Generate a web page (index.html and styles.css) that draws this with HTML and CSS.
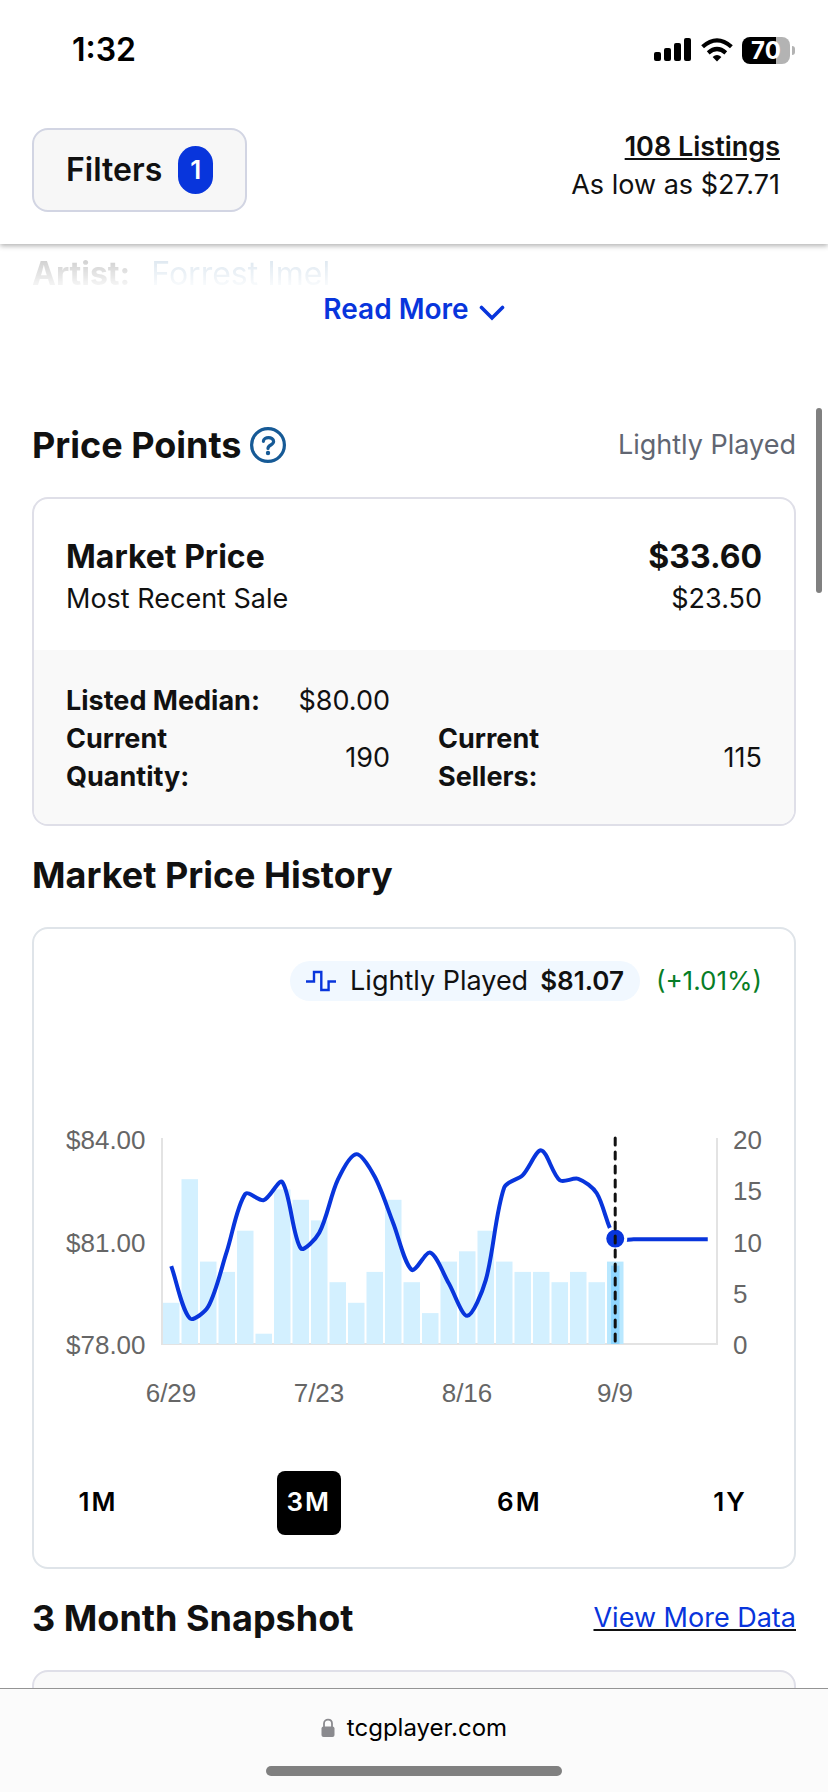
FILE: index.html
```html
<!DOCTYPE html>
<html lang="en">
<head>
    <meta charset="UTF-8">
    <meta name="viewport" content="width=device-width, initial-scale=1.0">
    <title>Price Points</title>
    <link rel="stylesheet" href="styles.css">
</head>
<body>
    <header class="top">
        <div class="status-bar">
            <span class="time">1:32</span>
            <div class="status-icons">
                <svg width="38" height="24" viewBox="0 0 38 24">
                    <rect x="0" y="14" width="7" height="9" rx="2"/>
                    <rect x="10" y="10" width="7" height="13" rx="2"/>
                    <rect x="20" y="5" width="7" height="18" rx="2"/>
                    <rect x="30" y="0" width="7" height="23" rx="2"/>
                </svg>
                <svg width="32" height="24" viewBox="0 0 32 24">
                    <path d="M16 23.5 L11.6 18.9 Q16 15.2 20.4 18.9 Z"/>
                    <path d="M7.2 14.8 Q16 7.3 24.8 14.8" fill="none" stroke="#000" stroke-width="4.2"/>
                    <path d="M1.6 8.8 Q16 -4 30.4 8.8" fill="none" stroke="#000" stroke-width="4.2"/>
                </svg>
                <div class="battery"><span class="battery-level">70</span></div>
            </div>
        </div>
        <div class="toolbar">
            <button class="filters" type="button">Filters <span class="badge">1</span></button>
            <div class="listings">
                <a href="#listings">108 Listings</a>
                <span>As low as $27.71</span>
            </div>
        </div>
    </header>

    <main class="content">
        <div class="description"><b>Artist:</b> <span>Forrest Imel</span></div>
        <button class="read-more" type="button">
            Read More
            <svg width="26" height="16" viewBox="0 0 26 16"><path d="M2.5 2.5 L13 13 L23.5 2.5"/></svg>
        </button>

        <section>
            <div class="section-head">
                <h2>Price Points
                    <svg class="help" width="36" height="36" viewBox="0 0 36 36">
                        <circle cx="18" cy="18" r="16.4"/>
                        <path d="M13.4 14.3 C13.4 9.6 23.6 9.2 23.6 14.6 C23.6 18.2 18 17.8 18 21.4"/>
                        <circle class="dot" cx="18" cy="26" r="2.2"/>
                    </svg>
                </h2>
                <span class="condition">Lightly Played</span>
            </div>
            <div class="card">
                <div class="prices">
                    <div class="row market"><span>Market Price</span><span>$33.60</span></div>
                    <div class="row"><span>Most Recent Sale</span><span>$23.50</span></div>
                </div>
                <div class="stats">
                    <div class="row stat"><b>Listed Median:</b><span>$80.00</span></div>
                    <div></div>
                    <div class="row stat"><b>Current Quantity:</b><span>190</span></div>
                    <div class="row stat"><b>Current Sellers:</b><span>115</span></div>
                </div>
            </div>
        </section>

        <section>
            <div class="section-head">
                <h2>Market Price History</h2>
            </div>
            <div class="card history">
                <div class="legend">
                    <div class="pill">
                        <svg width="30" height="22" viewBox="0 0 30 22"><path d="M0 11.5 H8 V2 H15.3 V20 H22.6 V11.5 H30"/></svg>
                        <span class="series">Lightly Played</span>
                        <b>$81.07</b>
                    </div>
                    <span class="change">(+1.01%)</span>
                </div>
                <svg class="chart" viewBox="0 0 696 300">
                    <g class="axis">
                        <path d="M96 18 V225 M95 224 H652 M651 18 V225"/>
                    </g>
                    <g id="bars"></g>
                    <path id="line" class="line"/>
                    <circle id="point" class="point" r="10.5"/>
                    <path class="cursor" d="M549.2 18 V223"/>
                    <g class="labels">
                        <text x="0" y="29">$84.00</text>
                        <text x="0" y="132">$81.00</text>
                        <text x="0" y="234">$78.00</text>
                        <text x="667" y="29">20</text>
                        <text x="667" y="80">15</text>
                        <text x="667" y="132">10</text>
                        <text x="667" y="183">5</text>
                        <text x="667" y="234">0</text>
                    </g>
                    <g class="labels dates">
                        <text x="105" y="282">6/29</text>
                        <text x="253" y="282">7/23</text>
                        <text x="401" y="282">8/16</text>
                        <text x="549" y="282">9/9</text>
                    </g>
                </svg>
                <div class="ranges">
                    <button type="button">1M</button>
                    <button type="button" class="active">3M</button>
                    <button type="button">6M</button>
                    <button type="button">1Y</button>
                </div>
            </div>
        </section>

        <section>
            <div class="section-head">
                <h2>3 Month Snapshot</h2>
                <a class="more-data" href="#data"><span>View More Data</span></a>
            </div>
            <div class="card snapshot"></div>
        </section>
        <div class="scroll-thumb"></div>
    </main>

    <footer class="browser-bar">
        <div class="address">
            <svg width="14" height="20" viewBox="0 0 14 20">
                <path d="M3 9 V5.6 C3 0.4 11 0.4 11 5.6 V9" fill="none" stroke="#8a8a8e" stroke-width="1.8"/>
                <rect x="0.5" y="8.6" width="13" height="10.4" rx="2" fill="#8a8a8e"/>
            </svg>
            <span>tcgplayer.com</span>
        </div>
        <div class="home-indicator"></div>
    </footer>
    <script src="chart.js"></script>
</body>
</html>
```
FILE: styles.css
```css
* {
    margin: 0;
    padding: 0;
    box-sizing: border-box;
}

body {
    display: flex;
    flex-direction: column;
    height: 100vh;
    overflow: hidden;
    font-family: Inter, "Liberation Sans", sans-serif;
    font-size: 27px;
    line-height: 38px;
    color: #111;
    background: #fff;
}

button {
    font: inherit;
    color: inherit;
    border: none;
    background: none;
    cursor: pointer;
}

a {
    color: inherit;
}

.top {
    position: relative;
    z-index: 1;
    background: #fff;
    box-shadow: 0 2px 5px rgba(0, 0, 0, 0.3);
}

.status-bar {
    display: flex;
    justify-content: space-between;
    align-items: center;
    height: 100px;
    padding: 0 33px 0 72px;
    color: #000;
}

.time {
    font-size: 32px;
    font-weight: 600;
}

.status-icons {
    display: flex;
    align-items: center;
    gap: 9px;
}

.battery {
    position: relative;
    width: 48px;
    height: 27px;
    margin-right: 5px;
    border-radius: 8px;
    background: linear-gradient(90deg, #000 70%, #b3b3b3 70%);
    text-align: center;
}

.battery::after {
    content: "";
    position: absolute;
    left: 50px;
    top: 9px;
    width: 3px;
    height: 9px;
    border-radius: 0 4px 4px 0;
    background: #b3b3b3;
}

.battery-level {
    display: block;
    font-size: 24px;
    font-weight: 700;
    line-height: 27px;
    color: #fff;
}

.toolbar {
    display: flex;
    justify-content: space-between;
    align-items: flex-start;
    padding: 28px 48px 32px 32px;
}

.filters {
    display: flex;
    align-items: center;
    gap: 16px;
    height: 84px;
    padding: 0 32px;
    border: 2px solid #d2d5e3;
    border-radius: 16px;
    background: #f7f7f7;
    font-size: 32px;
    font-weight: 600;
}

.badge {
    min-width: 35px;
    border-radius: 18px;
    background: #0835dc;
    color: #fff;
    font-size: 26px;
    line-height: 48px;
}

.listings {
    display: flex;
    flex-direction: column;
    align-items: flex-end;
}

.listings a {
    font-weight: 600;
}

.content {
    position: relative;
    flex: 1;
    min-height: 0;
    overflow: hidden;
    padding: 0 32px;
}

.description {
    padding-top: 11px;
    font-size: 32px;
    color: #111;
    opacity: 0.2;
    -webkit-mask-image: linear-gradient(#000 30%, rgba(0, 0, 0, 0.2) 85%);
    mask-image: linear-gradient(#000 30%, rgba(0, 0, 0, 0.2) 85%);
}

.description span {
    margin-left: 12px;
    color: #165a96;
    opacity: 0.7;
}

.read-more {
    display: flex;
    align-items: center;
    gap: 10px;
    margin: 0 auto 71px;
    font-size: 28px;
    font-weight: 600;
    line-height: 32px;
    color: #0835dc;
}

.read-more svg {
    margin-top: 8px;
    fill: none;
    stroke: #0835dc;
    stroke-width: 3.6;
    stroke-linecap: round;
}

.section-head {
    display: flex;
    justify-content: space-between;
    align-items: center;
    padding: 27px 0 30px;
}

h2 {
    display: flex;
    align-items: center;
    gap: 8px;
    font-size: 36px;
    font-weight: 700;
    line-height: 44px;
}

.help {
    fill: none;
    stroke: #165a96;
    stroke-width: 3.2;
    stroke-linecap: round;
}

.help .dot {
    fill: #165a96;
    stroke: none;
}

.condition {
    color: #616672;
}

.card {
    border: 2px solid #dfdfe8;
    border-radius: 16px;
    overflow: hidden;
}

.prices {
    padding: 35px 32px 32px;
}

.row {
    display: flex;
    justify-content: space-between;
    align-items: center;
}

.market {
    font-size: 32px;
    font-weight: 700;
    line-height: 46px;
}

.stats {
    display: grid;
    grid-template-columns: 1fr 1fr;
    column-gap: 48px;
    padding: 32px 32px 28px;
    background: #f9f9f9;
}

.stat b {
    max-width: 200px;
}

.history {
    padding: 32px;
    border-color: #dfe4e9;
}

.legend {
    display: flex;
    justify-content: flex-end;
    align-items: center;
    gap: 16px;
    font-size: 26px;
}

.pill {
    display: flex;
    align-items: center;
    height: 40px;
    padding: 0 16px;
    border-radius: 20px;
    background: #f1f8ff;
}

.pill svg {
    margin-right: 14px;
    fill: none;
    stroke: #0835dc;
    stroke-width: 2.4;
}

.series {
    font-size: 27px;
}

.pill b {
    margin-left: 12px;
    font-weight: 600;
}

.change {
    color: #077d26;
}

.chart {
    display: block;
    width: 100%;
    margin: 119px 0 51px;
}

.axis {
    fill: none;
    stroke: #e3e3e3;
    stroke-width: 2;
}

.bar {
    fill: #d3f0ff;
}

.bar-active {
    fill: #b9e8ff;
}

.bar-core {
    fill: #8fd6ff;
}

.line {
    fill: none;
    stroke: #0835dc;
    stroke-width: 4;
}

.point {
    fill: #0835dc;
    stroke: #fff;
    stroke-width: 3;
}

.cursor {
    fill: none;
    stroke: #111;
    stroke-width: 3;
    stroke-dasharray: 7 7;
    stroke-linecap: round;
}

.labels {
    font-family: "Liberation Sans", Arial, sans-serif;
    font-size: 26px;
    fill: #666;
}

.dates {
    text-anchor: middle;
}

.ranges {
    display: flex;
    justify-content: space-between;
}

.ranges button {
    width: 64px;
    height: 64px;
    padding-bottom: 2px;
    border-radius: 8px;
    color: #000;
    font-size: 26px;
    font-weight: 600;
    letter-spacing: 2px;
}

.ranges .active {
    background: #000;
    color: #fff;
}

.more-data {
    color: #111;
}

.more-data span {
    color: #0835dc;
}

.snapshot {
    height: 200px;
    background: #f9f9f9;
}

.scroll-thumb {
    position: absolute;
    top: 164px;
    right: 6px;
    width: 6px;
    height: 185px;
    border-radius: 3px;
    background: #808080;
}

.browser-bar {
    height: 104px;
    padding-top: 20px;
    border-top: 1px solid #949494;
    background: #fbfbfb;
    color: #000;
}

.address {
    display: flex;
    justify-content: center;
    align-items: center;
    gap: 12px;
    font-size: 24px;
}

.home-indicator {
    width: 296px;
    height: 10px;
    margin: 19px auto 0;
    border-radius: 5px;
    background: #808080;
}
```
FILE: chart.js
```js
const sales = [4, 16, 8, 7, 11, 1, 15, 14, 12, 6, 4, 7, 14, 6, 3, 8, 9, 11, 8, 7, 7, 6, 7, 6, 8];
const prices = [80.27, 78.75, 79.09, 80.69, 82.37, 82.19, 82.72, 80.79, 81.24, 82.78, 83.53, 82.87,
    81.52, 80.16, 80.66, 79.77, 78.82, 79.86, 82.56, 82.92, 83.64, 82.77, 82.81, 82.39, 81.07,
    81.05, 81.05, 81.05, 81.05, 81.05];

const left = 96, top_ = 18, plotHeight = 206, step = 18.5, tension = 0.3;
const active = sales.length - 1;

function rect(x, y, width, height, cls) {
    const el = document.createElementNS("http://www.w3.org/2000/svg", "rect");
    el.setAttribute("x", x);
    el.setAttribute("y", y);
    el.setAttribute("width", width);
    el.setAttribute("height", height);
    el.setAttribute("class", cls);
    document.getElementById("bars").appendChild(el);
}

sales.forEach((value, i) => {
    const height = value / 20 * plotHeight;
    const x = left + i * step;
    const y = top_ + plotHeight - height;
    rect(x + 1, y, 16.5, height, i === active ? "bar-active" : "bar");
    if (i === active) {
        rect(x + 5, y + 4, 8.5, height - 4, "bar-core");
    }
});

const points = prices.map((price, i) => ({
    x: left + (i + 0.5) * step,
    y: top_ + (84 - price) / 6 * plotHeight
}));

// control points on each side of a point
function controls(i) {
    const p = points[i];
    const prev = points[i - 1] || p;
    const next = points[i + 1] || p;
    const d1 = Math.hypot(p.x - prev.x, p.y - prev.y);
    const d2 = Math.hypot(next.x - p.x, next.y - p.y);
    const a = tension * d1 / (d1 + d2);
    const b = tension * d2 / (d1 + d2);
    const dx = next.x - prev.x;
    const dy = next.y - prev.y;
    return [p.x - a * dx, p.y - a * dy, p.x + b * dx, p.y + b * dy];
}

let d = `M${points[0].x} ${points[0].y}`;
for (let i = 1; i < points.length; i++) {
    const c1 = controls(i - 1);
    const c2 = controls(i);
    d += ` C${c1[2]} ${c1[3]} ${c2[0]} ${c2[1]} ${points[i].x} ${points[i].y}`;
}
document.getElementById("line").setAttribute("d", d);

const point = document.getElementById("point");
point.setAttribute("cx", points[active].x);
point.setAttribute("cy", points[active].y);
```
